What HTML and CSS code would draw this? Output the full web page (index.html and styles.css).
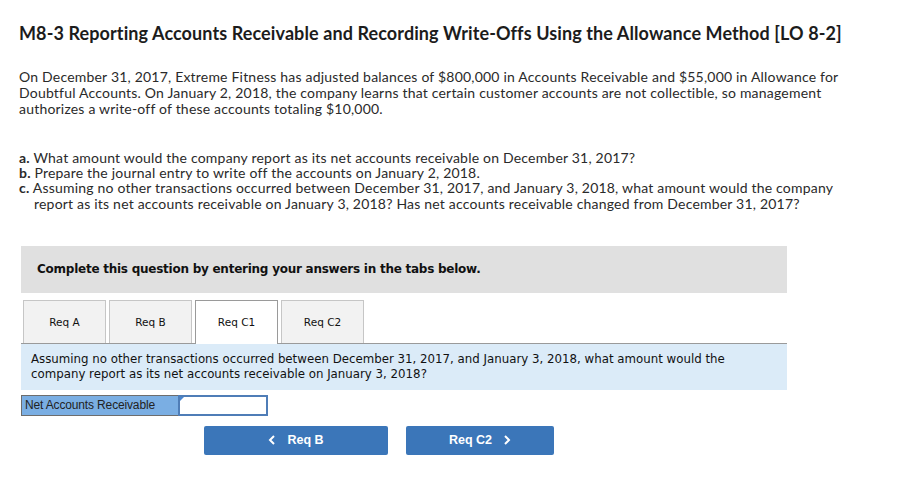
FILE: index.html
```html
<!DOCTYPE html>
<html lang="en">
<head>
<meta charset="utf-8">
<title>M8-3 Reporting Accounts Receivable</title>
<link rel="stylesheet" href="styles.css">
</head>
<body>
<main class="page">
  <h1 class="title">M8-3 Reporting Accounts Receivable and Recording Write-Offs Using the Allowance Method [LO 8-2]</h1>
  <p class="intro">On December 31, 2017, Extreme Fitness has adjusted balances of $800,000 in Accounts Receivable and $55,000 in Allowance for Doubtful Accounts. On January 2, 2018, the company learns that certain customer accounts are not collectible, so management authorizes a write-off of these accounts totaling $10,000.</p>
  <ol class="reqs">
    <li><b>a.</b> What amount would the company report as its net accounts receivable on December 31, 2017?</li>
    <li><b>b.</b> Prepare the journal entry to write off the accounts on January 2, 2018.</li>
    <li><b>c.</b> Assuming no other transactions occurred between December 31, 2017, and January 3, 2018, what amount would the company report as its net accounts receivable on January 3, 2018? Has net accounts receivable changed from December 31, 2017?</li>
  </ol>
  <section class="quiz">
    <div class="banner">Complete this question by entering your answers in the tabs below.</div>
    <div class="tabs">
      <div class="tab">Req A</div>
      <div class="tab">Req B</div>
      <div class="tab tab-active">Req C1</div>
      <div class="tab">Req C2</div>
    </div>
    <div class="panel">Assuming no other transactions occurred between December 31, 2017, and January 3, 2018, what amount would the company report as its net accounts receivable on January 3, 2018?</div>
    <div class="answer-row">
      <div class="answer-label">Net Accounts Receivable</div>
      <div class="answer-input"></div>
    </div>
    <div class="nav">
      <button class="nav-btn nav-prev"><svg class="chev" width="8" height="10" viewBox="0 0 8 10"><polyline points="6,1 2,5 6,9" fill="none" stroke="#fff" stroke-width="2"/></svg><span>Req B</span></button>
      <button class="nav-btn nav-next"><span>Req C2</span><svg class="chev" width="8" height="10" viewBox="0 0 8 10"><polyline points="2,1 6,5 2,9" fill="none" stroke="#fff" stroke-width="2"/></svg></button>
    </div>
  </section>
</main>
</body>
</html>
```

FILE: styles.css
```css
* { box-sizing: border-box; }
html, body { margin: 0; padding: 0; background: #fff; }
.page {
  padding: 22px 0 0 19px;
  width: 903px;
  font-family: "Lato", "Liberation Sans", sans-serif;
  color: #222;
}
.title {
  margin: 0;
  font-size: 18px;
  line-height: 22px;
  font-weight: 700;
  letter-spacing: 0.1px;
  color: #1c1c1c;
}
.intro {
  margin: 25px 0 0 0;
  font-size: 14px;
  letter-spacing: 0.2px;
  line-height: 16px;
  width: 830px;
  color: #2a2a2a;
}
.reqs {
  list-style: none;
  margin: 33px 0 0 0;
  padding: 0;
  font-size: 14px;
  letter-spacing: 0.2px;
  line-height: 15.2px;
  color: #2a2a2a;
  width: 830px;
}
.reqs li {
  padding-left: 15px;
  text-indent: -15px;
}
.reqs b { font-weight: 700; }
.quiz {
  margin: 35px 0 0 2px;
  width: 766px;
}
.banner {
  background: #e0e0e0;
  height: 47px;
  padding-left: 16px;
  display: flex;
  align-items: center;
  font-family: "DejaVu Sans", Verdana, sans-serif;
  font-weight: 700;
  font-size: 12px;
  letter-spacing: -0.25px;
  color: #111;
}
.tabs {
  display: flex;
  gap: 3px;
  margin-top: 7px;
  padding-left: 2px;
}
.tab {
  width: 83px;
  height: 43px;
  background: #f2f2f2;
  border: 1px solid #c6c6c6;
  border-bottom: none;
  display: flex;
  align-items: center;
  justify-content: center;
  font-family: "DejaVu Sans", Verdana, sans-serif;
  font-size: 10.5px;
  color: #111;
}
.tab-active {
  background: #fff;
  border-color: #9a9a9a;
  height: 44px;
  margin-bottom: -1px;
  position: relative;
}
.panel {
  background: #dbebf8;
  border-top: 1px solid #9a9a9a;
  padding: 8px 40px 8px 10px;
  font-family: "DejaVu Sans", Verdana, sans-serif;
  font-size: 11.8px;
  line-height: 15px;
  color: #111;
}
.answer-row {
  display: flex;
  margin-top: 5px;
  height: 21px;
}
.answer-label {
  width: 157px;
  background: #7aaee3;
  border: 1px solid #6d6d6d;
  border-right: none;
  padding-left: 3px;
  display: flex;
  align-items: center;
  font-family: "Liberation Sans", Arial, sans-serif;
  font-size: 12px;
  color: #222;
  letter-spacing: -0.15px;
}
.answer-input {
  width: 90px;
  background: #fff;
  border: 2px solid #4f7db7;
  position: relative;
}
.answer-input::before {
  content: "";
  position: absolute;
  left: 0;
  top: 0;
  border-top: 4px solid #4a86d0;
  border-right: 4px solid transparent;
  border-bottom: 4px solid transparent;
}
.nav {
  display: flex;
  gap: 18px;
  margin-top: 10px;
  padding-left: 183px;
}
.nav-btn {
  height: 29px;
  background: #3b76b9;
  border: none;
  border-radius: 2px;
  color: #fff;
  font-family: "Liberation Sans", Arial, sans-serif;
  font-weight: 700;
  font-size: 12.5px;
  display: flex;
  align-items: center;
  justify-content: center;
  gap: 11px;
  padding: 0;
}
.nav-prev { width: 184px; }
.nav-next { width: 148px; }
.chev { display: block; }
```
